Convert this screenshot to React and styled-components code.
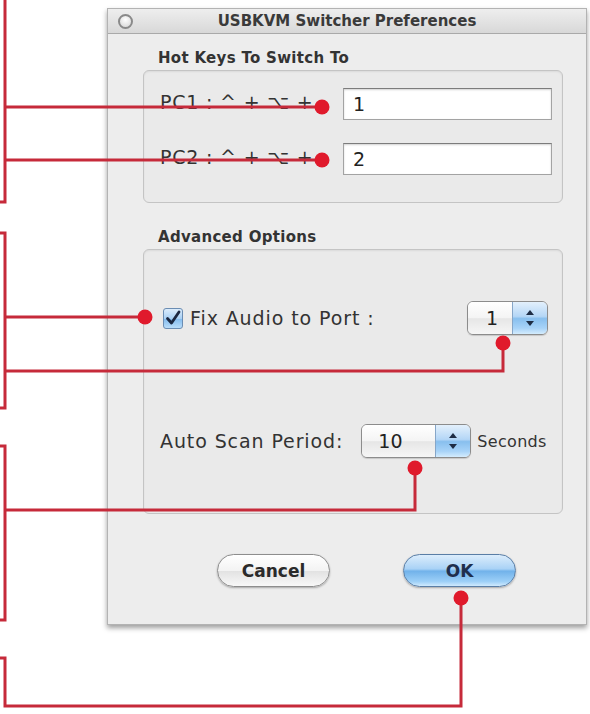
import React from "react";
import styled, { createGlobalStyle } from "styled-components";

const GlobalStyle = createGlobalStyle`
  html, body { margin: 0; padding: 0; background: #fff; }
  body { font-family: "DejaVu Sans", "Liberation Sans", sans-serif; color: #303030; }
`;

const Page = styled.div`
  position: relative;
  width: 590px;
  height: 714px;
  box-sizing: border-box;
  padding: 8px 0 0 107px;
  overflow: hidden;
  background: #fff;
`;

const Window = styled.div`
  width: 480px;
  height: 617px;
  box-sizing: border-box;
  display: flex;
  flex-direction: column;
  background: #ededed;
  border: 1px solid #b3b3b3;
  box-shadow: 0 3px 5px rgba(0, 0, 0, 0.38);
`;

const TitleBar = styled.div`
  display: grid;
  grid-template-columns: 1fr auto 1fr;
  align-items: center;
  height: 24px;
  padding: 0 10px;
  background: linear-gradient(#eeeeee, #d8d8d8);
  border-bottom: 1px solid #a9a9a9;
`;

const CloseDot = styled.span`
  justify-self: start;
  width: 15px;
  height: 15px;
  box-sizing: border-box;
  border-radius: 50%;
  border: 2px solid #8a8a8a;
  background: radial-gradient(circle at 50% 35%, #ffffff, #d4d4d4);
`;

const Title = styled.span`
  font-size: 15px;
  font-weight: bold;
  color: #3a3a3a;
  white-space: nowrap;
`;

const Body = styled.div`
  display: flex;
  flex-direction: column;
  padding: 0 23px 0 35px;
`;

const SectionLabel = styled.div`
  margin: ${(p) => p.$top}px 0 3px 15px;
  font-size: 15px;
  line-height: 18px;
  font-weight: bold;
  letter-spacing: 0.3px;
  color: #333;
`;

const GroupBox = styled.div`
  display: flex;
  flex-direction: column;
  gap: ${(p) => p.$gap}px;
  padding: ${(p) => p.$pad};
  border: 1px solid #c4c4c4;
  border-radius: 6px;
  background: #eaeaea;
  box-shadow: inset 0 1px 2px rgba(0, 0, 0, 0.07);
`;

const KeyRow = styled.div`
  display: flex;
  align-items: center;
  height: 32px;
`;

const KeyLabel = styled.span`
  flex: 1;
  padding-bottom: 5px;
  font-size: 19px;
  letter-spacing: 0.8px;
  color: #333;
  white-space: nowrap;
`;

const TextField = styled.div`
  width: 209px;
  height: 32px;
  box-sizing: border-box;
  display: flex;
  align-items: center;
  padding-left: 9px;
  border: 1px solid #a3a3a3;
  border-top-color: #7c7c7c;
  background: #fff;
  box-shadow: inset 0 1px 2px rgba(0, 0, 0, 0.18);
  font-size: 19px;
  color: #222;
`;

const OptionRow = styled.div`
  display: flex;
  align-items: center;
  height: 34px;
`;

const CheckBox = styled.span`
  width: 20px;
  height: 21px;
  margin-left: 3px;
  box-sizing: border-box;
  display: flex;
  align-items: center;
  justify-content: center;
  border: 1px solid #6b8db3;
  border-radius: 3px;
  background: linear-gradient(#dcecfb, #a9d0f4 50%, #86bdee 55%, #b9ddfa);
`;

const OptionText = styled.span`
  margin-left: ${(p) => p.$gap || 0}px;
  font-size: ${(p) => p.$size || 19}px;
  letter-spacing: ${(p) => p.$track ?? 0.9}px;
  color: #333;
  white-space: nowrap;
`;

const Popup = styled.div`
  display: flex;
  width: ${(p) => p.$width}px;
  height: 34px;
  box-sizing: border-box;
  margin-left: ${(p) => (p.$push ? "auto" : `${p.$gap || 0}px`)};
  border: 1px solid #8c8c8c;
  border-radius: 6px;
  overflow: hidden;
  box-shadow: 0 1px 1px rgba(0, 0, 0, 0.15);
`;

const PopupValue = styled.span`
  flex: 1;
  display: flex;
  align-items: center;
  padding-left: ${(p) => p.$pad}px;
  font-size: 19px;
  color: #222;
  background: linear-gradient(#ffffff, #f4f4f4 50%, #e6e6e6 52%, #f6f6f6);
`;

const PopupArrows = styled.span`
  width: 34px;
  display: flex;
  align-items: center;
  justify-content: center;
  border-left: 1px solid #86a6c8;
  background: linear-gradient(#e3f0fc, #b4d6f6 45%, #88bfee 52%, #a8d3f8 82%, #d4ecfd);
`;

const ButtonRow = styled.div`
  display: flex;
  gap: 73px;
  margin-top: 40px;
  padding-left: 74px;
`;

const PushButton = styled.button`
  width: 113px;
  height: 33px;
  padding: 0;
  border-radius: 17px;
  font-family: "DejaVu Sans", sans-serif;
  font-size: 17px;
  font-weight: bold;
  color: ${(p) => (p.$primary ? "#1f2f4d" : "#2a2a2a")};
  border: 1px solid ${(p) => (p.$primary ? "#5a7ea6" : "#8d8d8d")};
  background: ${(p) =>
    p.$primary
      ? "linear-gradient(#dcedfc, #a9d2f6 45%, #71b2ea 52%, #9ccff7 85%, #d0eafd)"
      : "linear-gradient(#ffffff, #f3f3f3 50%, #e2e2e2 52%, #f8f8f8)"};
  box-shadow: 0 1px 2px rgba(0, 0, 0, 0.3);
`;

const Callouts = styled.svg`
  position: absolute;
  left: 0;
  top: 0;
  pointer-events: none;
`;

const arrowsIcon = (
  <svg width="10" height="18" viewBox="0 0 10 18">
    <path d="M5 1 L9 6 H1 Z" fill="#1e2c44" />
    <path d="M5 17 L9 12 H1 Z" fill="#1e2c44" />
  </svg>
);

function Stepper({ value, width, pad, push, gap }) {
  return (
    <Popup $width={width} $push={push} $gap={gap}>
      <PopupValue $pad={pad}>{value}</PopupValue>
      <PopupArrows>{arrowsIcon}</PopupArrows>
    </Popup>
  );
}

// red leader lines with their end dots, drawn over the dialog
const leaders = [
  { d: "M5 -5 V202 H0", dots: [] },
  { d: "M5 107 H322", dots: [[322, 107]] },
  { d: "M5 160 H322", dots: [[322, 160]] },
  { d: "M0 233 H5 V408 H0", dots: [] },
  { d: "M5 317 H145", dots: [[145, 317]] },
  { d: "M5 371 H503 V343", dots: [[503, 343]] },
  { d: "M0 446 H5 V620 H0", dots: [] },
  { d: "M5 510 H415 V468", dots: [[415, 468]] },
  { d: "M0 658 H5 V706 H461 V598", dots: [[461, 598]] },
];

export default function App() {
  return (
    <>
      <GlobalStyle />
      <Page>
        <Window>
          <TitleBar>
            <CloseDot />
            <Title>USBKVM Switcher Preferences</Title>
            <span />
          </TitleBar>
          <Body>
            <SectionLabel $top={15}>Hot Keys To Switch To</SectionLabel>
            <GroupBox $gap={23} $pad="17px 10px 27px 16px">
              <KeyRow>
                <KeyLabel>PC1 : ^ + ⌥ +</KeyLabel>
                <TextField>1</TextField>
              </KeyRow>
              <KeyRow>
                <KeyLabel>PC2 : ^ + ⌥ +</KeyLabel>
                <TextField>2</TextField>
              </KeyRow>
            </GroupBox>

            <SectionLabel $top={25}>Advanced Options</SectionLabel>
            <GroupBox $gap={89} $pad="51px 14px 55px 16px">
              <OptionRow>
                <CheckBox>
                  <svg width="16" height="16" viewBox="0 0 16 16">
                    <path
                      d="M2.5 8.5 L6.5 13 L14 2"
                      fill="none"
                      stroke="#1b2740"
                      strokeWidth="2.8"
                      strokeLinecap="round"
                      strokeLinejoin="round"
                    />
                  </svg>
                </CheckBox>
                <OptionText $gap={7}>Fix Audio to Port :</OptionText>
                <Stepper value="1" width={81} pad={18} push />
              </OptionRow>
              <OptionRow>
                <OptionText>Auto Scan Period:</OptionText>
                <Stepper value="10" width={110} pad={16} gap={18} />
                <OptionText $gap={6} $size={16} $track={0.3}>Seconds</OptionText>
              </OptionRow>
            </GroupBox>

            <ButtonRow>
              <PushButton>Cancel</PushButton>
              <PushButton $primary>OK</PushButton>
            </ButtonRow>
          </Body>
        </Window>

        <Callouts width="590" height="714" viewBox="0 0 590 714">
          {leaders.map((l, i) => (
            <g key={i}>
              <path d={l.d} fill="none" stroke="#c62a3a" strokeWidth="3" />
              {l.dots.map(([cx, cy], j) => (
                <circle key={j} cx={cx} cy={cy} r="7.5" fill="#e01a2c" />
              ))}
            </g>
          ))}
        </Callouts>
      </Page>
    </>
  );
}
